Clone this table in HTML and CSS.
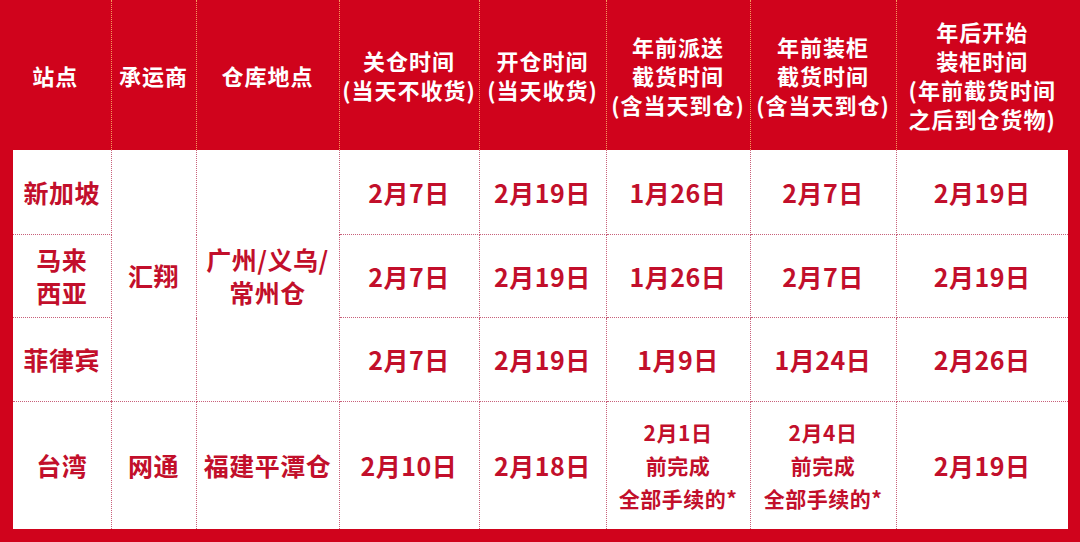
FILE: index.html
```html
<!DOCTYPE html>
<html lang="zh-CN">
<head>
<meta charset="utf-8">
<title>春节截仓时间表</title>
<link rel="stylesheet" href="styles.css">
</head>
<body>
<div class="sheet">
  <table class="schedule">
    <colgroup>
      <col class="c-site">
      <col class="c-carrier">
      <col class="c-wh">
      <col class="c-close">
      <col class="c-open">
      <col class="c-deliver">
      <col class="c-load">
      <col class="c-after">
    </colgroup>
    <thead>
      <tr class="head-row">
        <th class="first">站点</th>
        <th>承运商</th>
        <th>仓库地点</th>
        <th>关仓时间<br>(当天不收货)</th>
        <th>开仓时间<br>(当天收货)</th>
        <th>年前派送<br>截货时间<br>(含当天到仓)</th>
        <th>年前装柜<br>截货时间<br>(含当天到仓)</th>
        <th>年后开始<br>装柜时间<br>(年前截货时间<br>之后到仓货物)</th>
      </tr>
    </thead>
    <tbody>
      <tr class="r1">
        <td>新加坡</td>
        <td rowspan="3">汇翔</td>
        <td rowspan="3">广州/义乌/<br>常州仓</td>
        <td>2月7日</td>
        <td>2月19日</td>
        <td>1月26日</td>
        <td>2月7日</td>
        <td>2月19日</td>
      </tr>
      <tr class="r2">
        <td>马来<br>西亚</td>
        <td>2月7日</td>
        <td>2月19日</td>
        <td>1月26日</td>
        <td>2月7日</td>
        <td>2月19日</td>
      </tr>
      <tr class="r3">
        <td>菲律宾</td>
        <td>2月7日</td>
        <td>2月19日</td>
        <td>1月9日</td>
        <td>1月24日</td>
        <td>2月26日</td>
      </tr>
      <tr class="r4">
        <td>台湾</td>
        <td>网通</td>
        <td>福建平潭仓</td>
        <td>2月10日</td>
        <td>2月18日</td>
        <td class="small">2月1日<br>前完成<br>全部手续的*</td>
        <td class="small">2月4日<br>前完成<br>全部手续的*</td>
        <td>2月19日</td>
      </tr>
    </tbody>
  </table>
</div>
</body>
</html>
```
FILE: styles.css
```css
html, body {
  margin: 0;
  padding: 0;
  background: #d0031c;
}

body {
  width: 1080px;
  height: 542px;
  overflow: hidden;
  font-family: "Noto Sans CJK SC", "Noto Sans", sans-serif;
  font-weight: 700;
}

.sheet {
  padding: 0 12px 13px 13px;
}

.schedule {
  width: 1055px;
  table-layout: fixed;
  border-collapse: collapse;
  border-spacing: 0;
}

.c-site { width: 98px; }
.c-carrier { width: 85px; }
.c-wh { width: 143px; }
.c-close { width: 140px; }
.c-open { width: 127px; }
.c-deliver { width: 144px; }
.c-load { width: 146px; }
.c-after { width: 172px; }

.schedule th {
  height: 150px;
  padding: 0;
  color: #ffffff;
  font-size: 22px;
  font-weight: 700;
  line-height: 29px;
  letter-spacing: 1px;
  text-align: center;
  vertical-align: middle;
  white-space: nowrap;
  border-right: 1px dotted #f59a5c;
}

.schedule th.first {
  padding-right: 13px;
}

.schedule th:last-child {
  border-right: none;
}

.schedule td {
  padding: 0;
  background: #ffffff;
  color: #c20f2b;
  font-size: 25px;
  line-height: 33px;
  letter-spacing: 0.5px;
  text-align: center;
  vertical-align: middle;
  white-space: nowrap;
  border-right: 1px dotted #c8607a;
  border-bottom: 1px dotted #c8607a;
}

.schedule td:last-child {
  border-right: none;
}

.schedule .r4 td {
  border-bottom: none;
}

.schedule td.small {
  font-size: 21px;
  line-height: 33px;
  letter-spacing: 0.5px;
}

.r1 td { height: 84px; }
.r2 td { height: 82px; }
.r3 td { height: 83px; }
.r4 td { height: 127px; }
```
